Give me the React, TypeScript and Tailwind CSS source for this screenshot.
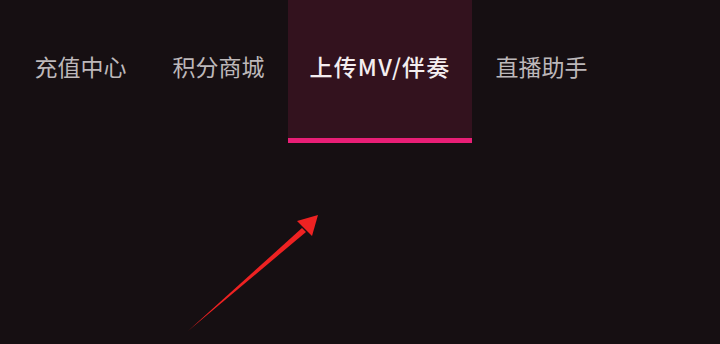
export default function App() {
  const tabs = [
    { label: "充值中心", w: "w-[137px]" },
    { label: "积分商城", w: "w-[139px]" },
    { label: "上传MV/伴奏", w: "w-[184px]" },
    { label: "直播助手", w: "w-[139px]" },
  ]
  const active = 2
  return (
    <div
      className="relative h-[344px] w-[720px] overflow-hidden bg-[#160f12]"
      style={{ fontFamily: '"Noto Sans CJK SC", "Noto Sans", sans-serif' }}
    >
      <div className="flex pl-[12px]">
        {tabs.map((t, i) => (
          <div
            key={t.label}
            className={
              i === active
                ? `flex h-[143px] flex-col bg-[#33121e] ${t.w}`
                : `flex h-[143px] flex-col ${t.w}`
            }
          >
            <div className="flex flex-1 items-center justify-center pb-[5px]">
              <span
                className={
                  i === active
                    ? "text-[23px] font-medium tracking-[1.2px] text-[#f4eef0]"
                    : "text-[23px] text-[#bdb8ba]"
                }
              >
                {t.label}
              </span>
            </div>
            {i === active ? <div className="h-[5px] bg-[#e91e76]" /> : <div className="h-[5px]" />}
          </div>
        ))}
      </div>
      <svg className="absolute left-0 top-0" width="720" height="344" viewBox="0 0 720 344">
        <path d="M188 331 L302 228 L306 232 Z" fill="#ee2222" />
        <path d="M318 215 L297 221 L312 236 Z" fill="#ee2222" />
      </svg>
    </div>
  )
}
